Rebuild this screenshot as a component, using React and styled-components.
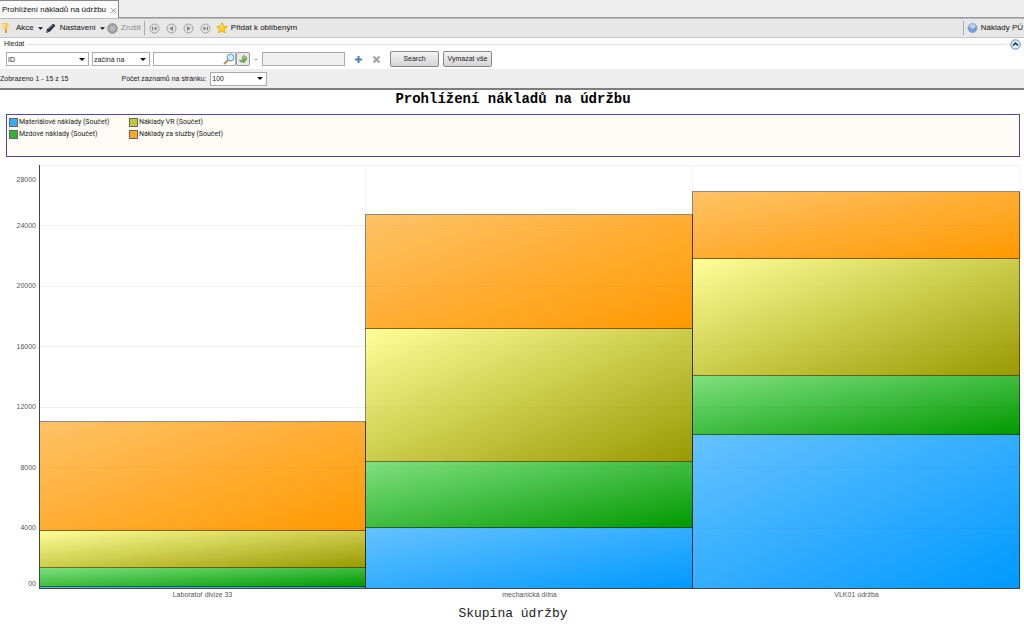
import React from 'react';
import styled, { createGlobalStyle } from 'styled-components';

const GlobalStyle = createGlobalStyle`
  * {
    box-sizing: border-box;
  }

  body {
    margin: 0;
    background: #fff;
    color: #1a1a1a;
    font-family: 'Liberation Sans', Arial, sans-serif;
    font-size: 8px;
    line-height: 10px;
  }

  button,
  input,
  select {
    font-family: inherit;
    color: inherit;
  }

  svg {
    display: block;
    flex: none;
  }
`;

const TabBar = styled.nav`
  display: flex;
  height: 18px;
  background: #eee;
  border-bottom: 1px solid #999;
`;

const Tab = styled.div`
  display: flex;
  align-items: center;
  gap: 4px;
  height: 18px;
  padding: 1px 1px 0 2px;
  background: #fafafa;
  border: 1px solid #888;
  border-left: 0;
  border-bottom: 0;
`;

const TabLink = styled.a`
  color: #111;
  text-decoration: none;
  white-space: nowrap;
`;

const PlainButton = styled.button`
  display: flex;
  align-items: center;
  gap: ${(p) => p.$gap || 0}px;
  padding: 0;
  border: 0;
  background: none;
  font-size: 8px;
  line-height: 10px;
  white-space: nowrap;
  color: ${(p) => (p.disabled ? '#8c8c8c' : '#111')};
`;

const Toolbar = styled.div`
  display: flex;
  align-items: center;
  gap: 2px;
  height: 20px;
  padding: 0 1px;
  background: #e7e7e7;
  border-top: 1px solid #bbb;
  border-bottom: 1px solid #c4c4c4;
`;

const Divider = styled.span`
  width: 1px;
  height: 14px;
  margin-left: ${(p) => (p.$push ? 'auto' : '1px')};
  margin-right: 1px;
  background: #aaa;
`;

const Pager = styled.div`
  display: flex;
  gap: 6px;
  margin: 0 3px 0 1px;
`;

const SearchPanel = styled.form`
  height: 31px;
`;

const PanelHead = styled.div`
  display: flex;
  align-items: center;
  gap: 3px;
  height: 12px;
  padding: 0 3px 0 4px;
  font-size: 7px;
`;

const Rule = styled.span`
  flex: 1;
  height: 1px;
  background: #dde2e4;
`;

const Fields = styled.div`
  display: flex;
  align-items: center;
  height: 18px;
  padding-left: 6px;
`;

const SelectBox = styled.span`
  display: grid;
  align-items: center;
  width: ${(p) => p.$width}px;
  margin-right: 3px;

  > * {
    grid-area: 1 / 1;
  }

  > svg {
    justify-self: end;
    margin-right: 4px;
    pointer-events: none;
  }
`;

const Select = styled.select`
  width: 100%;
  height: 14px;
  padding: 0 1px;
  appearance: none;
  background: #fff;
  border: 1px solid #aaa;
  border-radius: 0;
  font-size: 7px;
`;

const InputBox = styled.span`
  display: flex;
  align-items: center;
  width: 83px;
  height: 14px;
  background: ${(p) => (p.$muted ? '#f0f0f0' : '#fff')};
  border: 1px solid #aaa;
`;

const TextInput = styled.input`
  flex: 1;
  min-width: 0;
  height: 12px;
  padding: 0 2px;
  border: 0;
  background: none;
  font-size: 7px;
`;

const RefreshButton = styled.button`
  width: 14px;
  height: 14px;
  padding: 1px;
  background: #e9e9e9;
  border: 1px solid #999;
  border-radius: 2px;
`;

const Dash = styled.span`
  width: 12px;
  text-align: center;
`;

const FieldTools = styled.span`
  display: flex;
  gap: 9px;
  margin: 0 9px;
`;

const Button = styled.button`
  width: 49px;
  height: 16px;
  margin-right: 4px;
  padding: 0;
  background: linear-gradient(#f4f4f4, #d4d4d4);
  border: 1px solid #888;
  border-radius: 2px;
  font-size: 7px;
  line-height: 10px;
  white-space: nowrap;
`;

const ResultBar = styled.div`
  display: flex;
  align-items: center;
  height: 21px;
  background: #eee;
  border-bottom: 2px solid #7d7d7d;
  font-size: 7px;
  white-space: nowrap;
`;

const PageSize = styled.label`
  display: flex;
  align-items: center;
  gap: 4px;
  margin-left: 53px;
`;

const Report = styled.main`
  padding: 0 4px 0 6px;
`;

const Title = styled.h1`
  margin: 0;
  padding-top: 1px;
  font: bold 14px/17px 'Liberation Mono', 'Courier New', monospace;
  text-align: center;
  color: #000;
`;

const Legend = styled.ul`
  display: grid;
  grid-template-columns: repeat(2, 120px);
  grid-auto-rows: 12px;
  align-content: start;
  height: 43px;
  margin: 6px 0 8px;
  padding: 1px 2px;
  list-style: none;
  background: #fffcf7;
  border: 1px solid #54489c;
  font-family: Roboto, Arial, sans-serif;
  font-size: 7px;
  white-space: nowrap;
`;

const LegendItem = styled.li`
  display: flex;
  align-items: center;
  gap: 1px;
`;

const Swatch = styled.span`
  width: 9px;
  height: 9px;
  border: 1px solid #666;
  background: ${(p) => p.$color};
`;

const Chart = styled.section`
  display: grid;
  grid-template-columns: 33px 1fr;
  font-size: 7px;
  color: #555;
`;

const AxisValues = styled.div`
  display: grid;
  grid-template-rows: 1fr repeat(6, 2fr) 1fr;
  justify-items: end;
  align-items: center;
  height: 424px;
  padding-right: 3px;
`;

const AxisValue = styled.span`
  &:last-child {
    align-self: end;
  }
`;

const Plot = styled.svg`
  width: 100%;
  height: 424px;
  overflow: visible;
`;

const Categories = styled.div`
  grid-column: 2;
  display: grid;
  grid-template-columns: repeat(3, 1fr);
  padding-top: 1px;
  text-align: center;
`;

const AxisTitle = styled.div`
  margin-top: 6px;
  font: 13px/16px 'Liberation Mono', 'Courier New', monospace;
  text-align: center;
  color: #222;
`;

const SERIES = [
  { id: 'material', label: 'Materiálové náklady (Součet)', swatch: '#33adff', from: '#66c2ff', to: '#0099ff' },
  { id: 'vr', label: 'Náklady VR (Součet)', swatch: '#c2c83c', from: '#ffff99', to: '#999900' },
  { id: 'wages', label: 'Mzdové náklady (Součet)', swatch: '#2fb52f', from: '#80e080', to: '#009900' },
  { id: 'services', label: 'Náklady za služby (Součet)', swatch: '#ffa726', from: '#ffc266', to: '#ff9900' },
];

const STACK = ['material', 'wages', 'vr', 'services'];

const GROUPS = [
  { name: 'Laboratoř divize 33', material: 140, wages: 1240, vr: 2480, services: 7200 },
  { name: 'mechanická dílna', material: 4010, wages: 4370, vr: 8840, services: 7540 },
  { name: 'VLK01 údržba', material: 10190, wages: 3910, vr: 7750, services: 4430 },
];

const TICKS = ['28000', '24000', '20000', '16000', '12000', '8000', '4000', '00'];
const MAX = 28000;
const PLOT_HEIGHT = 423;

const toY = (value) => Math.round(PLOT_HEIGHT * (1 - value / MAX)) + 0.5;

const Caret = ({ size = 5 }) => (
  <svg width={size} height="3" viewBox="0 0 6 3" aria-hidden="true">
    <path d="M0 0h6L3 3z" fill="#111" />
  </svg>
);

const BulbIcon = () => (
  <svg width="11" height="12" viewBox="0 0 11 12" aria-hidden="true">
    <path d="M1 1h6l1 3-2 3H3L1 5z" fill="#ffc85a" />
    <path d="M2 2h2v3H2z" fill="#ffe9b0" />
    <path d="M4 7h2v4H4z" fill="#e79a2a" />
  </svg>
);

const PencilIcon = () => (
  <svg width="11" height="11" viewBox="0 0 11 11" aria-hidden="true">
    <path d="M1 10l1-4L8 .8l2.500 1.700L5 8.500z" fill="#26313c" />
    <path d="M3 6l5-4" stroke="#7b8c9c" />
    <path d="M1 10l1-2.500L3.500 9z" fill="#6c7a86" />
  </svg>
);

const CancelIcon = () => (
  <svg width="11" height="11" viewBox="0 0 11 11" aria-hidden="true">
    <circle cx="5.5" cy="5.5" r="4.8" fill="#a2a2a2" stroke="#909090" />
    <path d="M3.500 3.500h4v4h-4z" fill="#bdbdbd" stroke="#b2b2b2" />
  </svg>
);

const PagerIcon = ({ flip, bar }) => (
  <svg width="11" height="11" viewBox="0 0 11 11" aria-hidden="true">
    <circle cx="5.5" cy="5.5" r="4.5" fill="#e2e2e2" stroke="#a0a0a0" />
    <g transform={flip ? 'translate(11 0) scale(-1 1)' : undefined}>
      <path d={bar ? 'M7.500 3.500v4L4.500 5.500z' : 'M7 3v5L3.500 5.500z'} fill="#808080" />
      {bar && <path d="M3.500 3.500v4" stroke="#808080" />}
    </g>
  </svg>
);

const StarIcon = () => (
  <svg width="12" height="12" viewBox="0 0 12 12" aria-hidden="true">
    <path
      d="M6 .7l1.600 3.400 3.700.5-2.700 2.600.7 3.700L6 9.200l-3.300 1.700.7-3.700L.7 4.600l3.700-.5z"
      fill="#ffd21f"
      stroke="#e3a21a"
      strokeWidth=".8"
    />
    <path d="M4 5l1.500-.5L6 3" stroke="#fff3a0" fill="none" />
  </svg>
);

const HelpIcon = () => (
  <svg width="11" height="12" viewBox="0 0 12 12" aria-hidden="true">
    <circle cx="6" cy="6" r="5" fill="#719bdd" stroke="#9aa9c4" />
    <ellipse cx="6" cy="3.700" rx="3.500" ry="2.200" fill="#b6cef2" />
    <path d="M4.500 5h3L6 8z" fill="#c9dcf7" />
  </svg>
);

const CollapseIcon = () => (
  <svg width="11" height="11" viewBox="0 0 11 11" aria-hidden="true">
    <circle cx="5.5" cy="5.5" r="4.700" fill="#e3f0fa" stroke="#5685ad" />
    <path d="M3 6.500l2.500-2.300L8 6.500" fill="none" stroke="#12305c" strokeWidth="1.6" />
  </svg>
);

const SearchIcon = () => (
  <svg width="12" height="12" viewBox="0 0 12 12" aria-hidden="true">
    <path d="M1 11l4-4" stroke="#c98b4c" strokeWidth="2" />
    <circle cx="7.5" cy="4.5" r="3.3" fill="#d5f0fb" stroke="#6fa9cf" strokeWidth="1.2" />
  </svg>
);

const RefreshIcon = () => (
  <svg width="10" height="10" viewBox="0 0 10 10" aria-hidden="true">
    <path d="M1 5.500l3 .5V3l2-2 3 2v3L6 9 2 8z" fill="#72a85a" />
    <path d="M4.500 2.500L6.500 5 8.500 3z" fill="#a9cf95" />
  </svg>
);

const PlusIcon = () => (
  <svg width="9" height="9" viewBox="0 0 9 9" aria-hidden="true">
    <path d="M4.500 1v7M1 4.500h7" stroke="#4f7db8" strokeWidth="2" />
  </svg>
);

const CrossIcon = ({ size = 9, color = '#a0a0a0', weight = 2 }) => (
  <svg width={size} height={size} viewBox="0 0 9 9" aria-hidden="true">
    <path d="M1.500 1.500l6 6M7.500 1.500l-6 6" stroke={color} strokeWidth={weight} />
  </svg>
);

const Dropdown = ({ width, children, ...rest }) => (
  <SelectBox $width={width}>
    <Select {...rest}>{children}</Select>
    <Caret size={6} />
  </SelectBox>
);

const StackedChart = () => (
  <Plot role="img" aria-label="Náklady podle skupiny údržby">
    <defs>
      {SERIES.map((s) => (
        <linearGradient key={s.id} id={s.id} x1="0" y1="0" x2="1" y2="1">
          <stop offset="0" stopColor={s.from} />
          <stop offset="1" stopColor={s.to} />
        </linearGradient>
      ))}
    </defs>
    {TICKS.map((tick) => (
      <line key={tick} x1="0" x2="100%" y1={toY(+tick)} y2={toY(+tick)} stroke="#f4f4f4" />
    ))}
    {GROUPS.map((group, i) => {
      let total = 0;
      const width = 100 / GROUPS.length;
      return (
        <g key={group.name} shapeRendering="crispEdges">
          <line
            x1={`${width * (i + 1)}%`}
            x2={`${width * (i + 1)}%`}
            y1="0"
            y2={PLOT_HEIGHT}
            stroke="#f4f4f4"
          />
          {STACK.map((id) => {
            const bottom = toY(total);
            total += group[id];
            const top = toY(total);
            return (
              <rect
                key={id}
                x={`${width * i}%`}
                y={top}
                width={`${width}%`}
                height={bottom - top}
                fill={`url(#${id})`}
                stroke="#000"
                strokeOpacity=".45"
              />
            );
          })}
        </g>
      );
    })}
    {TICKS.slice(1, -1).map((tick) => (
      <line key={tick} x1="0" x2="100%" y1={toY(+tick)} y2={toY(+tick)} stroke="#000" strokeOpacity=".02" />
    ))}
    <path d={`M.5 0V${PLOT_HEIGHT}`} stroke="#444" />
    <line x1="0" x2="100%" y1={PLOT_HEIGHT + 0.5} y2={PLOT_HEIGHT + 0.5} stroke="#444" />
  </Plot>
);

const App = () => {
  return (
    <>
      <GlobalStyle />
      <TabBar>
        <Tab>
          <TabLink href="#naklady">Prohlížení nákladů na údržbu</TabLink>
          <PlainButton type="button" aria-label="Zavřít">
            <CrossIcon size={7} color="#777" weight={1} />
          </PlainButton>
        </Tab>
      </TabBar>
      <Toolbar>
        <PlainButton type="button" $gap={4}>
          <BulbIcon />
          Akce
          <Caret />
        </PlainButton>
        <PlainButton type="button" $gap={4}>
          <PencilIcon />
          Nastavení
          <Caret />
        </PlainButton>
        <PlainButton type="button" $gap={3} disabled>
          <CancelIcon />
          Zrušit
        </PlainButton>
        <Divider />
        <Pager>
          <PlainButton type="button" aria-label="První">
            <PagerIcon bar />
          </PlainButton>
          <PlainButton type="button" aria-label="Předchozí">
            <PagerIcon />
          </PlainButton>
          <PlainButton type="button" aria-label="Další">
            <PagerIcon flip />
          </PlainButton>
          <PlainButton type="button" aria-label="Poslední">
            <PagerIcon flip bar />
          </PlainButton>
        </Pager>
        <PlainButton type="button" $gap={3}>
          <StarIcon />
          Přidat k oblíbeným
        </PlainButton>
        <Divider $push />
        <PlainButton type="button" $gap={3}>
          <HelpIcon />
          Náklady PÚ
        </PlainButton>
      </Toolbar>

      <SearchPanel onSubmit={(e) => e.preventDefault()}>
        <PanelHead>
          Hledat
          <Rule />
          <PlainButton type="button" aria-label="Sbalit">
            <CollapseIcon />
          </PlainButton>
        </PanelHead>
        <Fields>
          <Dropdown width={83} aria-label="Pole">
            <option>ID</option>
          </Dropdown>
          <Dropdown width={58} aria-label="Podmínka">
            <option>začíná na</option>
          </Dropdown>
          <InputBox>
            <TextInput type="text" aria-label="Hodnota od" />
            <SearchIcon />
          </InputBox>
          <RefreshButton type="button" aria-label="Obnovit">
            <RefreshIcon />
          </RefreshButton>
          <Dash>-</Dash>
          <InputBox $muted>
            <TextInput type="text" aria-label="Hodnota do" disabled />
          </InputBox>
          <FieldTools>
            <PlainButton type="button" aria-label="Přidat podmínku">
              <PlusIcon />
            </PlainButton>
            <PlainButton type="button" aria-label="Odebrat podmínku">
              <CrossIcon />
            </PlainButton>
          </FieldTools>
          <Button type="submit">Search</Button>
          <Button type="reset">Vymazat vše</Button>
        </Fields>
      </SearchPanel>

      <ResultBar>
        <span>Zobrazeno 1 - 15 z 15</span>
        <PageSize>
          Počet záznamů na stránku:
          <Dropdown width={57}>
            <option>100</option>
          </Dropdown>
        </PageSize>
      </ResultBar>

      <Report>
        <Title>Prohlížení nákladů na údržbu</Title>
        <Legend>
          {SERIES.map((s) => (
            <LegendItem key={s.id}>
              <Swatch $color={s.swatch} />
              {s.label}
            </LegendItem>
          ))}
        </Legend>
        <Chart>
          <AxisValues>
            {TICKS.map((tick) => (
              <AxisValue key={tick}>{tick}</AxisValue>
            ))}
          </AxisValues>
          <StackedChart />
          <Categories>
            {GROUPS.map((group) => (
              <span key={group.name}>{group.name}</span>
            ))}
          </Categories>
        </Chart>
        <AxisTitle>Skupina údržby</AxisTitle>
      </Report>
    </>
  );
};

export default App;
